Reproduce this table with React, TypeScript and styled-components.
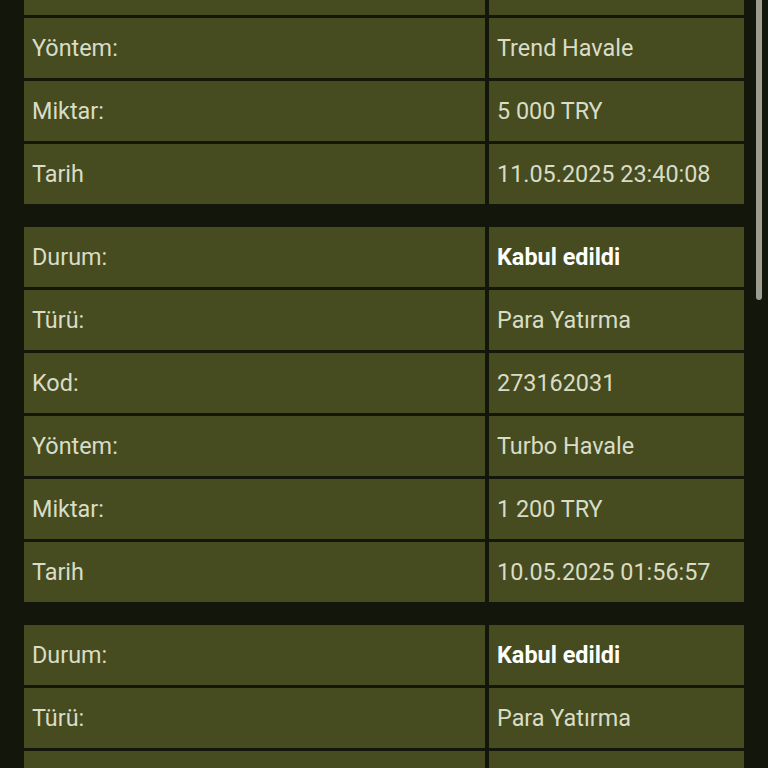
import React from "react";
import styled, { createGlobalStyle } from "styled-components";

const Global = createGlobalStyle`
  html, body { margin: 0; padding: 0; background: #13160a; overflow: hidden; }
  body { font-family: Roboto, "Noto Sans", sans-serif; }
`;

const Page = styled.div`
  position: relative;
  width: 768px;
  height: 768px;
  overflow: hidden;
  background: #13160a;
`;

const List = styled.div`
  display: flex;
  flex-direction: column;
  gap: 23px;
  margin-top: -45px;
  padding: 0 24px;
`;

const Group = styled.div`
  display: grid;
  grid-template-columns: 461px 255px;
  column-gap: 4px;
  row-gap: 3px;
`;

const Cell = styled.div<{ $bold?: boolean }>`
  height: 60px;
  background: #464c1f;
  display: flex;
  align-items: center;
  padding: 0 8px;
  box-sizing: border-box;
  font-size: 23.4px;
  color: ${(p) => (p.$bold ? "#ffffff" : "#d9dcc6")};
  font-weight: ${(p) => (p.$bold ? 700 : 400)};
  white-space: nowrap;
`;

const Thumb = styled.div`
  position: absolute;
  top: 0;
  left: 756px;
  width: 6px;
  height: 300px;
  background: #9c9d8e;
  border-radius: 0 0 3px 3px;
`;

type Row = [string, string, boolean?];

const groups: Row[][] = [
  [
    ["", ""],
    ["Yöntem:", "Trend Havale"],
    ["Miktar:", "5 000 TRY"],
    ["Tarih", "11.05.2025 23:40:08"],
  ],
  [
    ["Durum:", "Kabul edildi", true],
    ["Türü:", "Para Yatırma"],
    ["Kod:", "273162031"],
    ["Yöntem:", "Turbo Havale"],
    ["Miktar:", "1 200 TRY"],
    ["Tarih", "10.05.2025 01:56:57"],
  ],
  [
    ["Durum:", "Kabul edildi", true],
    ["Türü:", "Para Yatırma"],
    ["", ""],
  ],
];

export default function App() {
  return (
    <Page>
      <Global />
      <List>
        {groups.map((g, gi) => (
          <Group key={gi}>
            {g.map(([k, v, b], ri) => (
              <React.Fragment key={ri}>
                <Cell>{k}</Cell>
                <Cell $bold={b}>{v}</Cell>
              </React.Fragment>
            ))}
          </Group>
        ))}
      </List>
      <Thumb />
    </Page>
  );
}
